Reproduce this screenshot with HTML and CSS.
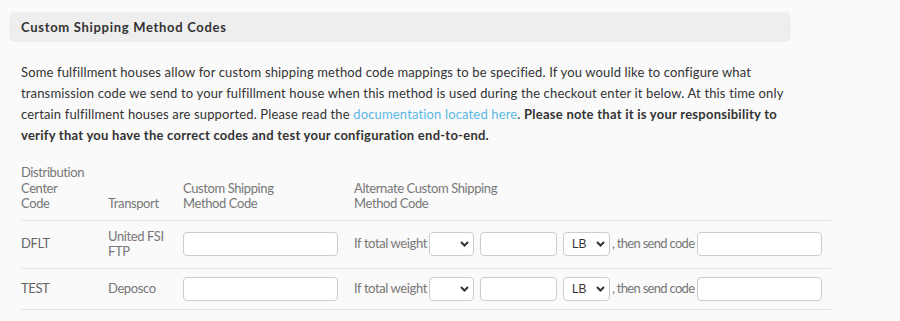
FILE: index.html
```html
<!doctype html>
<html lang="en">
  <head>
    <meta charset="UTF-8">
    <meta name="viewport" content="width=device-width, initial-scale=1.0">
    <title>Custom Shipping Method Codes</title>
    <link rel="stylesheet" href="styles.css">
  </head>
  <body>
    <div class="panel">
      <div class="panel-heading">Custom Shipping Method Codes</div>

      <p class="intro">
        Some fulfillment houses allow for custom shipping method code mappings to be specified. If you would like to configure what
        transmission code we send to your fulfillment house when this method is used during the checkout enter it below. At this time only
        certain fulfillment houses are supported. Please read the <a href="#">documentation located here</a>.
        <strong>Please note that it is your responsibility to verify that you have the correct codes and test your configuration end-to-end.</strong>
      </p>

      <table class="codes">
        <thead>
          <tr>
            <th class="col-dc">Distribution<br>Center<br>Code</th>
            <th class="col-transport">Transport</th>
            <th class="col-code">Custom Shipping<br>Method Code</th>
            <th>Alternate Custom Shipping<br>Method Code</th>
          </tr>
        </thead>
        <tbody>
          <tr>
            <td>DFLT</td>
            <td>United FSI<br>FTP</td>
            <td><input type="text" class="code-input"></td>
            <td>
              <div class="alt">
                <span>If total weight</span>
                <span class="select-wrap op">
                  <select><option></option><option>&gt;</option><option>&lt;</option></select>
                  <svg viewBox="0 0 9 6" width="9" height="6"><path d="M1 1 L4.5 4.5 L8 1" fill="none" stroke="#333" stroke-width="2"/></svg>
                </span>
                <input type="text" class="weight-input">
                <span class="select-wrap unit">
                  <select><option>LB</option><option>KG</option></select>
                  <svg viewBox="0 0 9 6" width="9" height="6"><path d="M1 1 L4.5 4.5 L8 1" fill="none" stroke="#333" stroke-width="2"/></svg>
                </span>
                <span class="then">, then send code</span>
                <input type="text" class="alt-input">
              </div>
            </td>
          </tr>
          <tr>
            <td>TEST</td>
            <td>Deposco</td>
            <td><input type="text" class="code-input"></td>
            <td>
              <div class="alt">
                <span>If total weight</span>
                <span class="select-wrap op">
                  <select><option></option><option>&gt;</option><option>&lt;</option></select>
                  <svg viewBox="0 0 9 6" width="9" height="6"><path d="M1 1 L4.5 4.5 L8 1" fill="none" stroke="#333" stroke-width="2"/></svg>
                </span>
                <input type="text" class="weight-input">
                <span class="select-wrap unit">
                  <select><option>LB</option><option>KG</option></select>
                  <svg viewBox="0 0 9 6" width="9" height="6"><path d="M1 1 L4.5 4.5 L8 1" fill="none" stroke="#333" stroke-width="2"/></svg>
                </span>
                <span class="then">, then send code</span>
                <input type="text" class="alt-input">
              </div>
            </td>
          </tr>
        </tbody>
      </table>
    </div>
  </body>
</html>
```

FILE: styles.css
```css
body {
  margin: 0;
  background: #fafafa;
  font-family: Lato, "Open Sans", sans-serif;
  font-size: 13px;
  color: #333;
}
.panel {
  padding: 12px 0 0 9px;
}
.panel-heading {
  width: 758px;
  background: #eeeeee;
  border-radius: 6px;
  padding: 0 12px;
  height: 30px;
  line-height: 30px;
  font-weight: bold;
  letter-spacing: 0.7px;
  color: #333;
}
.intro {
  margin: 20px 0 19px 12px;
  width: 770px;
  line-height: 21px;
  letter-spacing: 0.15px;
}
.intro a {
  color: #5bb8e4;
  text-decoration: none;
}
.intro strong {
  font-weight: bold;
  letter-spacing: 0.25px;
}
.codes {
  margin-left: 12px;
  width: 810px;
  table-layout: fixed;
  border-collapse: collapse;
  color: #777;
  font-size: 13px;
  letter-spacing: -0.4px;
  line-height: 15.5px;
}
.codes th {
  font-weight: normal;
  text-align: left;
  vertical-align: bottom;
  padding: 0 0 8px 0;
  border-bottom: 1px solid #e3e3e3;
}
.codes td {
  padding: 8px 0;
  border-bottom: 1px solid #e3e3e3;
  vertical-align: middle;
}
.col-dc {
  width: 87px;
}
.col-transport {
  width: 75px;
}
.col-code {
  width: 171px;
}
.codes td:first-child {
  color: #666;
}
input, select {
  box-sizing: border-box;
  height: 24px;
  border: 1px solid #ccc;
  border-radius: 4px;
  background: #fff;
  font-family: "Liberation Sans", Arial, sans-serif;
  font-size: 12px;
  letter-spacing: 0;
  color: #333;
  margin: 0;
}
.code-input {
  width: 155px;
  display: block;
}
.alt {
  display: flex;
  align-items: center;
  white-space: nowrap;
}
.select-wrap {
  position: relative;
  display: inline-block;
  margin-left: 2px;
}
.select-wrap select {
  appearance: none;
  -webkit-appearance: none;
  display: block;
  padding: 0 0 0 8px;
}
.select-wrap svg {
  position: absolute;
  right: 5px;
  top: 9px;
  pointer-events: none;
}
.op select {
  width: 45px;
}
.unit {
  margin-left: 6px;
}
.unit select {
  width: 47px;
}
.weight-input {
  width: 77px;
  margin-left: 6px;
}
.then {
  margin-left: 2px;
  letter-spacing: -0.7px;
}
.alt-input {
  width: 125px;
  margin-left: 3px;
}
```
